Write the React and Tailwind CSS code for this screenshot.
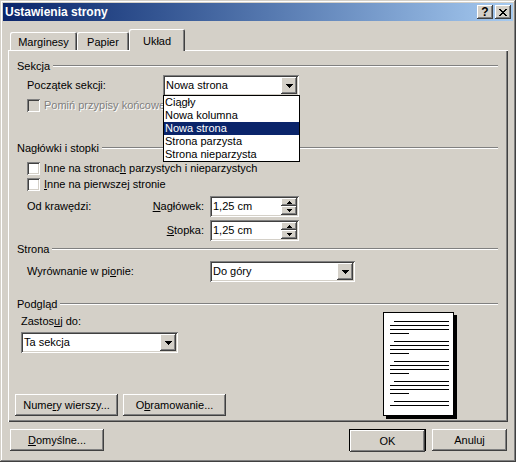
const raised = 'shadow-[inset_-1px_-1px_0_#404040,inset_1px_1px_0_#fff,inset_-2px_-2px_0_#808080]'
const sunken = 'shadow-[inset_1px_1px_0_#808080,inset_-1px_-1px_0_#fff,inset_2px_2px_0_#404040,inset_-2px_-2px_0_#d4d0c8]'

// little pixel triangle, 2*size-1 wide
function Tri({ size = 4, up }) {
  const rows = Array.from({ length: size }, (_, i) => i)
  return (
    <svg width={size * 2 - 1} height={size} shapeRendering="crispEdges">
      {rows.map(i => (
        <rect key={i} x={i} y={up ? size - 1 - i : i} width={size * 2 - 1 - 2 * i} height={1} fill="#000" />
      ))}
    </svg>
  )
}

const closeRows = ['11000011', '01100110', '00111100', '00011000', '00111100', '01100110', '11000011']

function CloseGlyph() {
  return (
    <svg width="8" height="7" shapeRendering="crispEdges">
      {closeRows.map((r, y) =>
        r.split('').map((c, x) => (c === '1' ? <rect key={`${x}-${y}`} x={x} y={y} width="1" height="1" fill="#000" /> : null))
      )}
    </svg>
  )
}

function TitleBar() {
  return (
    <div className="flex h-[18px] items-center bg-linear-to-r from-[#0a246a] to-[#a6caf0] pl-[2px] pr-[2px]">
      <span className="flex-1 text-[12px] font-bold text-white">Ustawienia strony</span>
      <div className={`flex h-[14px] w-[16px] items-center justify-center bg-[#d4d0c8] text-[12px] font-bold leading-none ${raised}`}>?</div>
      <div className={`ml-[2px] flex h-[14px] w-[16px] items-center justify-center bg-[#d4d0c8] ${raised}`}>
        <CloseGlyph />
      </div>
    </div>
  )
}

function Tab({ children, active, className }) {
  return (
    <div
      className={`flex items-center justify-center rounded-t-[2px] bg-[#d4d0c8] pt-[2px] shadow-[inset_1px_1px_0_#fff,inset_-1px_0_0_#404040,inset_-2px_0_0_#808080] ${
        active ? 'relative z-10 -mb-[1px] h-[22px]' : 'h-[18px]'
      } ${className}`}
    >
      {children}
    </div>
  )
}

function Group({ title, className = '' }) {
  return (
    <div className={`ml-[9px] mr-[10px] flex h-[14px] items-center ${className}`}>
      <span>{title}</span>
      <div className="ml-[3px] h-[2px] flex-1 border-b border-t border-b-white border-t-[#808080]" />
    </div>
  )
}

function Combo({ value, className = '', children }) {
  return (
    <div className={`relative flex h-[21px] items-center bg-white pl-[3px] ${sunken} ${className}`}>
      <span className="flex-1">{value}</span>
      <div className={`mr-[2px] flex h-[17px] w-[16px] items-center justify-center bg-[#d4d0c8] ${raised}`}>
        <Tri size={4} />
      </div>
      {children}
    </div>
  )
}

function Spin({ value }) {
  return (
    <div className={`flex h-[21px] w-[89px] items-center bg-white pl-[3px] ${sunken}`}>
      <span className="flex-1">{value}</span>
      <div className="mr-[2px] flex flex-col">
        <div className={`flex h-[8px] w-[16px] items-center justify-center bg-[#d4d0c8] ${raised}`}>
          <Tri size={3} up />
        </div>
        <div className={`flex h-[9px] w-[16px] items-center justify-center bg-[#d4d0c8] ${raised}`}>
          <Tri size={3} />
        </div>
      </div>
    </div>
  )
}

function Check({ children, disabled, className = '' }) {
  return (
    <div className={`ml-[19px] flex h-[13px] items-center ${className}`}>
      <span className={`h-[13px] w-[13px] shrink-0 ${sunken} ${disabled ? 'bg-[#d4d0c8]' : 'bg-white'}`} />
      <span className={`ml-[4px] ${disabled ? 'text-[#808080] [text-shadow:1px_1px_0_#fff]' : ''}`}>{children}</span>
    </div>
  )
}

function Btn({ children, className = '' }) {
  return (
    <div className={`flex h-[22px] items-center justify-center bg-[#d4d0c8] ${raised} ${className}`}>{children}</div>
  )
}

const listItems = ['Ciągły', 'Nowa kolumna', 'Nowa strona', 'Strona parzysta', 'Strona nieparzysta']

function PagePreview() {
  const groups = [9, 29, 49, 69, 89]
  const lines = []
  groups.forEach(g => {
    lines.push({ y: g, x: 11, w: 55 })
    lines.push({ y: g + 4, x: 7, w: 59 })
    if (g + 8 < 95) lines.push({ y: g + 8, x: 7, w: 59 })
    if (g + 12 < 95) lines.push({ y: g + 12, x: 7, w: 19 })
  })
  return (
    <svg width="74" height="107" shapeRendering="crispEdges">
      <rect x="3" y="3" width="71" height="104" fill="#000" />
      <rect x="0.5" y="0.5" width="70" height="103" fill="#fff" stroke="#000" />
      {lines.map((l, i) => (
        <rect key={i} x={l.x} y={l.y} width={l.w} height="1" fill="#000" />
      ))}
    </svg>
  )
}

export default function App() {
  return (
    <div
      className={`h-[462px] w-[516px] bg-[#d4d0c8] p-[3px] font-['Liberation_Sans',Arial,sans-serif] text-[11px] leading-[13px] text-black shadow-[inset_-1px_-1px_0_#404040,inset_1px_1px_0_#d4d0c8,inset_-2px_-2px_0_#808080,inset_2px_2px_0_#fff]`}
    >
      <TitleBar />
      <div className="px-[5px]">
        {/* tabs */}
        <div className="mt-[8px] flex h-[21px] items-end pl-[2px]">
          <Tab className="w-[67px]">Marginesy</Tab>
          <Tab className="w-[52px]">Papier</Tab>
          <Tab active className="w-[56px]">Układ</Tab>
        </div>

        {/* tab page */}
        <div className="flex h-[372px] flex-col shadow-[inset_1px_1px_0_#fff,inset_-1px_-1px_0_#404040,inset_-2px_-2px_0_#808080]">
          <Group title="Sekcja" className="mt-[9px]" />
          <div className="ml-[19px] mt-[2px] flex h-[21px] items-center">
            <span className="w-[136px]">Początek sekcji:</span>
            <Combo value="Nowa strona" className="w-[136px]">
              <div className="absolute left-0 top-[20px] z-20 h-[67px] w-[137px] border border-black bg-white">
                {listItems.map(it => (
                  <div
                    key={it}
                    className={`h-[13px] pl-[1px] ${it === 'Nowa strona' ? 'bg-[#0a246a] text-white' : ''}`}
                  >
                    {it}
                  </div>
                ))}
              </div>
            </Combo>
          </div>
          <Check disabled className="mt-[3px]">
            Pomiń przypisy końcowe
          </Check>

          <Group title="Nagłówki i stopki" className="mt-[29px]" />
          <Check className="mt-[7px]">
            Inne na stronac<u>h</u> parzystych i nieparzystych
          </Check>
          <Check className="mt-[3px]">
            <u>I</u>nne na pierwszej stronie
          </Check>
          <div className="ml-[19px] mt-[5px] flex h-[21px] items-center">
            <div className="flex w-[177px] justify-between">
              <span>Od krawędzi:</span>
              <span>
                <u>N</u>agłówek:
              </span>
            </div>
            <div className="ml-[6px]">
              <Spin value="1,25 cm" />
            </div>
          </div>
          <div className="ml-[19px] mt-[3px] flex h-[21px] items-center">
            <div className="flex w-[177px] justify-end">
              <span>
                <u>S</u>topka:
              </span>
            </div>
            <div className="ml-[6px]">
              <Spin value="1,25 cm" />
            </div>
          </div>

          <Group title="Strona" className="mt-[1px]" />
          <div className="ml-[19px] mt-[5px] flex h-[21px] items-center">
            <span className="w-[183px]">
              Wyrównanie w pi<u>o</u>nie:
            </span>
            <Combo value="Do góry" className="w-[145px]" />
          </div>

          <Group title="Podgląd" className="mt-[15px]" />
          <div className="flex">
            <div className="flex w-[375px] flex-col">
              <span className="ml-[13px] mt-[4px] h-[13px]">
                Zastos<u>u</u>j do:
              </span>
              <Combo value="Ta sekcja" className="ml-[13px] mt-[4px] w-[157px]" />
              <div className="ml-[7px] mt-[41px] flex gap-[5px]">
                <Btn className="w-[103px]">
                  Nume<u>r</u>y wierszy...
                </Btn>
                <Btn className="w-[103px]">
                  O<u>b</u>ramowanie...
                </Btn>
              </div>
            </div>
            <div className="mt-[1px]">
              <PagePreview />
            </div>
          </div>
        </div>

        {/* dialog buttons */}
        <div className="mt-[7px] flex">
          <Btn className="ml-[2px] w-[94px]">
            <u>D</u>omyślne...
          </Btn>
          <div className="flex-1" />
          <div className="h-[22px] w-[77px] border border-black">
            <Btn className="h-[20px] w-full">OK</Btn>
          </div>
          <Btn className="ml-[6px] mr-[1px] w-[75px]">Anuluj</Btn>
        </div>
      </div>
    </div>
  )
}
